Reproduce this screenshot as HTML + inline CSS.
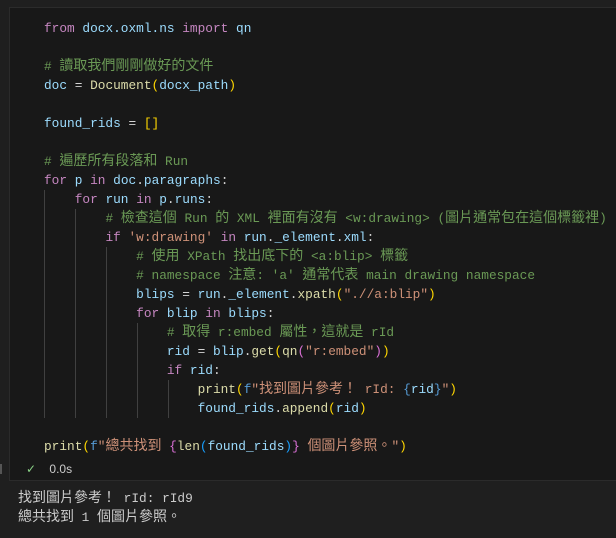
<!DOCTYPE html>
<html><head><meta charset="utf-8"><style>
body{margin:0;background:#1f1f1f;width:616px;height:538px;overflow:hidden;position:relative}
.cell{position:absolute;left:9px;top:7px;width:620px;height:474px;background:#181818;border:1px solid #2b2b2b;box-sizing:border-box}
pre{position:absolute;left:44px;top:19px;margin:0;font-family:"Liberation Mono","Noto Sans CJK TC",monospace;font-size:12.8px;line-height:19px;color:#d4d4d4;white-space:pre}
.z{font-size:14px;line-height:10px}
.k{color:#c586c0}.v{color:#9cdcfe}.f{color:#dcdcaa}.s{color:#ce9178}.c{color:#6a9955}.b1{color:#ffd700}.b2{color:#da70d6}.b3{color:#179fff}.bl{color:#569cd6}
.g{position:absolute;width:1px;background:#404040}
.out{position:absolute;left:18px;top:489px;font-family:"Liberation Mono","Noto Sans CJK TC",monospace;font-size:12.8px;line-height:19px;color:#cccccc;white-space:pre}
.st{position:absolute;left:26px;top:462px;font-family:"Liberation Sans",sans-serif;font-size:12px;color:#cccccc}
</style></head><body>
<div class="cell"></div>
<div class="g" style="left:44px;top:190px;height:228px"></div>
<div class="g" style="left:75px;top:209px;height:209px"></div>
<div class="g" style="left:106px;top:247px;height:171px"></div>
<div class="g" style="left:137px;top:323px;height:95px"></div>
<div class="g" style="left:168px;top:380px;height:38px"></div>
<pre><span class="k">from</span> <span class="v">docx.oxml.ns</span> <span class="k">import</span> <span class="v">qn</span>

<span class="c"># <span class="z">讀取我們剛剛做好的文件</span></span>
<span class="v">doc</span> = <span class="f">Document</span><span class="b1">(</span><span class="v">docx_path</span><span class="b1">)</span>

<span class="v">found_rids</span> = <span class="b1">[]</span>

<span class="c"># <span class="z">遍歷所有段落和</span> Run</span>
<span class="k">for</span> <span class="v">p</span> <span class="k">in</span> <span class="v">doc</span>.<span class="v">paragraphs</span>:
    <span class="k">for</span> <span class="v">run</span> <span class="k">in</span> <span class="v">p</span>.<span class="v">runs</span>:
        <span class="c"># <span class="z">檢查這個</span> Run <span class="z">的</span> XML <span class="z">裡面有沒有</span> &lt;w:drawing&gt; (<span class="z">圖片通常包在這個標籤裡</span>)</span>
        <span class="k">if</span> <span class="s">'w:drawing'</span> <span class="k">in</span> <span class="v">run</span>.<span class="v">_element</span>.<span class="v">xml</span>:
            <span class="c"># <span class="z">使用</span> XPath <span class="z">找出底下的</span> &lt;a:blip&gt; <span class="z">標籤</span></span>
            <span class="c"># namespace <span class="z">注意</span>: 'a' <span class="z">通常代表</span> main drawing namespace</span>
            <span class="v">blips</span> = <span class="v">run</span>.<span class="v">_element</span>.<span class="f">xpath</span><span class="b1">(</span><span class="s">".//a:blip"</span><span class="b1">)</span>
            <span class="k">for</span> <span class="v">blip</span> <span class="k">in</span> <span class="v">blips</span>:
                <span class="c"># <span class="z">取得</span> r:embed <span class="z">屬性，這就是</span> rId</span>
                <span class="v">rid</span> = <span class="v">blip</span>.<span class="f">get</span><span class="b1">(</span><span class="f">qn</span><span class="b2">(</span><span class="s">"r:embed"</span><span class="b2">)</span><span class="b1">)</span>
                <span class="k">if</span> <span class="v">rid</span>:
                    <span class="f">print</span><span class="b1">(</span><span class="bl">f</span><span class="s">"<span class="z">找到圖片參考！</span> rId: </span><span class="bl">{</span><span class="v">rid</span><span class="bl">}</span><span class="s">"</span><span class="b1">)</span>
                    <span class="v">found_rids</span>.<span class="f">append</span><span class="b1">(</span><span class="v">rid</span><span class="b1">)</span>

<span class="f">print</span><span class="b1">(</span><span class="bl">f</span><span class="s">"<span class="z">總共找到</span> </span><span class="b2">{</span><span class="f">len</span><span class="b3">(</span><span class="v">found_rids</span><span class="b3">)</span><span class="b2">}</span><span class="s"> <span class="z">個圖片參照。</span>"</span><span class="b1">)</span></pre>
<div style="position:absolute;left:0;top:464px;width:2px;height:10px;background:#555"></div>
<div class="st"><span style="color:#89d185">✓</span>&nbsp;&nbsp;&nbsp;&nbsp;0.0s</div>
<div class="out"><span class="z">找到圖片參考！</span> rId: rId9
<span class="z">總共找到</span> 1 <span class="z">個圖片參照。</span></div>
</body></html>
